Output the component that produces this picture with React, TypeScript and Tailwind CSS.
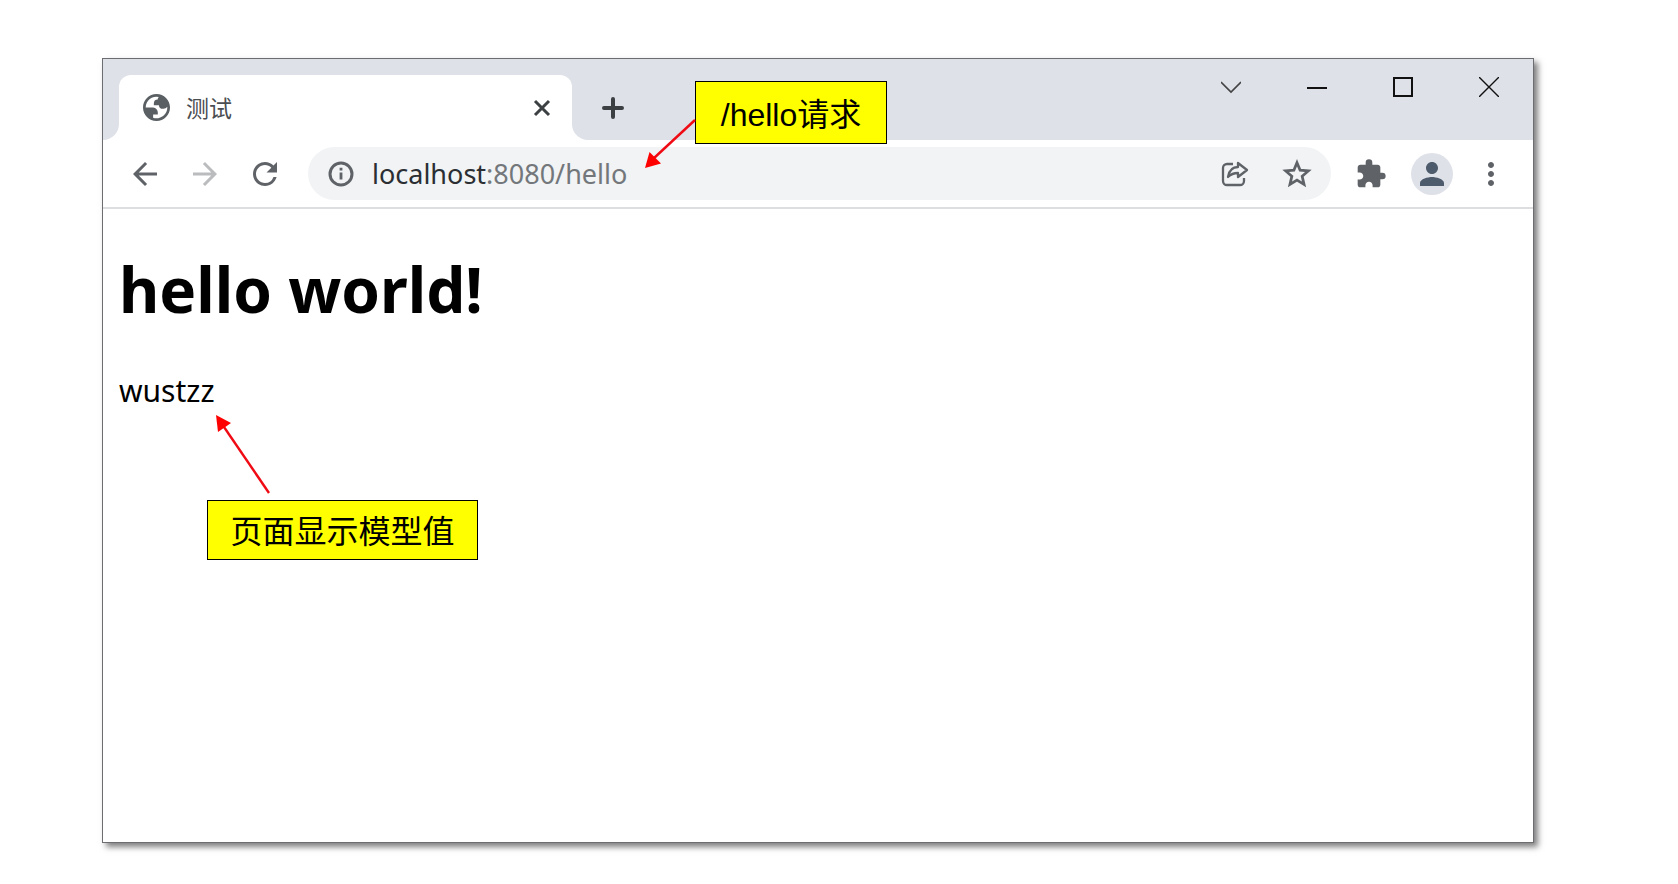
import type { ReactNode, SVGProps } from "react";
import { MdArrowBack, MdArrowForward, MdExtension, MdMoreVert, MdPerson, MdRefresh } from "react-icons/md";

function GlobeIcon() {
  return (
    <svg viewBox="2 2 20 20" className="size-[27px] shrink-0" fill="#5a5f63" aria-hidden="true">
      <path d="M12 2C6.48 2 2 6.48 2 12s4.48 10 10 10 10-4.48 10-10S17.52 2 12 2zM4 12h4.4c3.407.022 4.922 1.73 4.543 5.127H9.488v2.47a8.004 8.004 0 0 0 10.498-8.08C19.327 12.5 18.332 13 17 13c-2.137 0-3.206-.916-3.206-2.75h-3.748c-.274-2.728.683-4.092 2.87-4.092 0-.975.327-1.597.811-1.97A8.004 8.004 0 0 0 4 12z" fillRule="evenodd" />
    </svg>
  );
}

function InfoIcon() {
  return (
    <svg viewBox="0 0 30 30" className="size-[30px] shrink-0" fill="none" stroke="#5f6368" aria-hidden="true">
      <circle cx="15" cy="15" r="11" strokeWidth="3" />
      <path d="M15 13.5v7M15 8.8v2.8" strokeWidth="2.8" />
    </svg>
  );
}

function StarIcon() {
  return (
    <svg viewBox="1 1 22 22" className="size-8" fill="none" stroke="#5f6368" strokeWidth="1.9" aria-hidden="true">
      <path d="M12 4.200l2.150 5.200 5.650.5-4.250 3.700 1.280 5.500L12 16.200l-4.830 2.900 1.280-5.500L4.200 9.900l5.650-.5Z" />
    </svg>
  );
}

function ShareIcon() {
  return (
    <svg viewBox="0 0 28 26" className="h-[26px] w-7" fill="none" stroke="#5f6368" strokeWidth="2.3" strokeLinejoin="round" aria-hidden="true">
      <path d="M12 3H6a4 4 0 0 0-4 4v13a4 4 0 0 0 4 4h13a4 4 0 0 0 4-4v-3" />
      <path d="M17 2l9 7-9 7v-4c-4 0-7 1-10 4 1-6 4-10 10-10V2Z" />
    </svg>
  );
}

function Glyph({ children, ...rest }: SVGProps<SVGSVGElement> & { children: ReactNode }) {
  return (
    <svg viewBox="0 0 20 20" className="size-5" fill="none" stroke="#111" strokeWidth="1.4" aria-hidden="true" {...rest}>
      {children}
    </svg>
  );
}

function Tab() {
  return (
    <div className="relative ml-4 flex h-[65px] w-[453px] items-center rounded-t-xl bg-white pr-5 pl-6">
      <svg viewBox="0 0 16 16" className="absolute bottom-0 -left-4 size-4" aria-hidden="true">
        <path d="M16 0v16H0A16 16 0 0 0 16 0Z" fill="#fff" />
      </svg>
      <svg viewBox="0 0 16 16" className="absolute -right-4 bottom-0 size-4" aria-hidden="true">
        <path d="M0 0v16h16A16 16 0 0 1 0 0Z" fill="#fff" />
      </svg>
      <GlobeIcon />
      <span className="ml-4 text-[23px] leading-8 text-[#4a4d51]">测试</span>
      <button type="button" aria-label="Close tab" className="ml-auto">
        <Glyph stroke="#3c4043" strokeWidth="3">
          <path d="M3 3l14 14M17 3L3 17" />
        </Glyph>
      </button>
    </div>
  );
}

function TabStrip() {
  return (
    <div className="flex h-[81px] items-end bg-[#dee1e8]">
      <Tab />
      <button type="button" aria-label="New tab" className="mb-4 ml-[25px] p-1">
        <svg viewBox="0 0 24 24" className="size-6" stroke="#3c4043" strokeWidth="4" strokeLinecap="round" aria-hidden="true">
          <path d="M12 3v18M3 12h18" />
        </svg>
      </button>
      <div className="mr-[34px] ml-auto flex gap-[66px] self-start pt-[18px]">
        <button type="button" aria-label="Search tabs">
          <Glyph stroke="#444" strokeWidth="1.6">
            <path d="M0 5l10 10L20 5" />
          </Glyph>
        </button>
        <button type="button" aria-label="Minimize">
          <Glyph strokeWidth="2">
            <path d="M0 11h20" />
          </Glyph>
        </button>
        <button type="button" aria-label="Maximize">
          <Glyph strokeWidth="2">
            <path d="M1 1h18v18H1Z" />
          </Glyph>
        </button>
        <button type="button" aria-label="Close window">
          <Glyph>
            <path d="M0 0l20 20M20 0L0 20" />
          </Glyph>
        </button>
      </div>
    </div>
  );
}

function Toolbar() {
  return (
    <div className="flex h-[69px] items-center border-b-2 border-[#dcdedf] bg-white px-6 text-[#5f6368]">
      <div className="flex gap-6">
        <button type="button" aria-label="Back"><MdArrowBack className="size-9" /></button>
        <button type="button" aria-label="Forward" className="text-[#babcbe]"><MdArrowForward className="size-9" /></button>
        <button type="button" aria-label="Reload"><MdRefresh className="size-9" /></button>
      </div>
      <div className="ml-[25px] flex h-[53px] flex-1 items-center rounded-full bg-[#f1f3f4] px-[18px]">
        <InfoIcon />
        <a href="http://localhost:8080/hello" className="ml-4 text-[27px] leading-9 text-[#73777b]">
          <span className="text-[#2b2e33]">localhost</span>:8080/hello
        </a>
        <div className="ml-auto flex items-center gap-8">
          <button type="button" aria-label="Share"><ShareIcon /></button>
          <button type="button" aria-label="Bookmark"><StarIcon /></button>
        </div>
      </div>
      <button type="button" aria-label="Extensions" className="ml-6"><MdExtension className="size-8" /></button>
      <button type="button" aria-label="Profile" className="ml-6 grid size-[42px] place-items-center rounded-full bg-[#dee1e8] text-[#4d5b6c]">
        <MdPerson className="size-9" />
      </button>
      <button type="button" aria-label="Menu" className="ml-5"><MdMoreVert className="size-9" /></button>
    </div>
  );
}

function Note({ className, children }: { className: string; children: ReactNode }) {
  return (
    <div className={`absolute flex items-center justify-center border border-black bg-[#ffff00] pt-1 font-['Liberation_Sans','Noto_Sans_CJK_SC',sans-serif] text-[32px] leading-10 whitespace-nowrap text-black ${className}`}>
      {children}
    </div>
  );
}

export default function App() {
  return (
    <div className="min-h-screen bg-white px-[102px] py-[58px] font-['Noto_Sans','Noto_Sans_CJK_SC',sans-serif]">
      <div className="relative mr-[42px] border border-[#6b6d70] bg-white shadow-[4px_4px_6px_rgba(0,0,0,0.5)]">
        <TabStrip />
        <Toolbar />
        <main className="min-h-[633px] px-4 pt-10 text-black">
          <h1 className="text-[62px] leading-20 font-bold">hello world!</h1>
          <p className="mt-[38px] text-[30px] leading-12">wustzz</p>
        </main>
        <Note className="top-[22px] left-[592px] h-[63px] w-[192px]">/hello请求</Note>
        <Note className="top-[441px] left-[104px] h-[60px] w-[271px]">页面显示模型值</Note>
        <svg viewBox="0 0 54 52" className="absolute top-[59px] left-[540px] h-[52px] w-[54px]" aria-hidden="true">
          <path d="M52 2L10 41" stroke="#f00a14" strokeWidth="2.4" />
          <path d="M2 50L6.5 34L18 45.5Z" fill="red" />
        </svg>
        <svg viewBox="0 0 58 82" className="absolute top-[354px] left-[111px] h-[82px] w-[58px]" aria-hidden="true">
          <path d="M10 14L55 80" stroke="#f00a14" strokeWidth="2.4" />
          <path d="M2 2L17 10L4 19Z" fill="red" />
        </svg>
      </div>
    </div>
  );
}
